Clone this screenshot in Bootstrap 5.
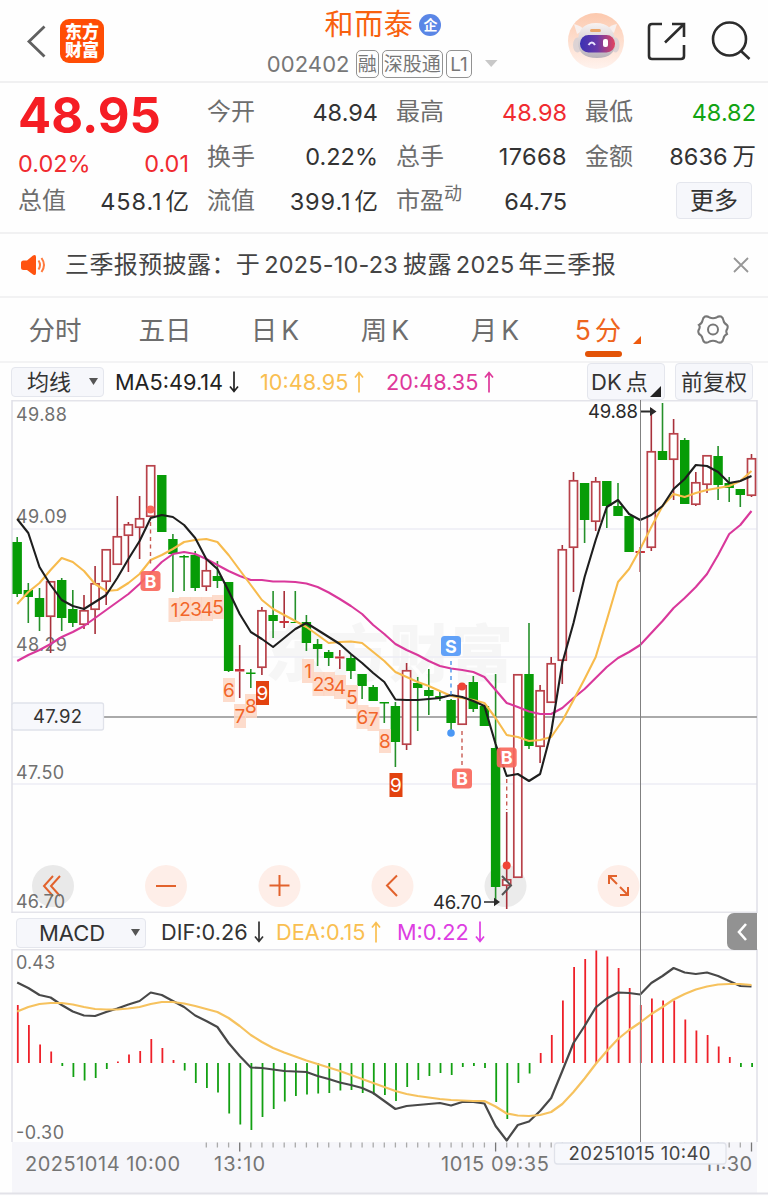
<!DOCTYPE html>
<html lang="zh-CN">
<head>
<meta charset="utf-8">
<meta name="viewport" content="width=device-width, initial-scale=1">
<title>和而泰 002402</title>
<link href="https://cdn.jsdelivr.net/npm/bootstrap@5.3.0/dist/css/bootstrap.min.css" rel="stylesheet">
<style>
  body { font-family: Inter, "Noto Sans CJK SC", sans-serif; background: #fefefe; color: #333; line-height: 1; width: 768px; overflow-x: hidden; font-size: 24px; }
  svg { display: block; flex: none; }
  .hdr { height: 83px; border-bottom: 2px solid #f0f0f1; }
  .hdr-side { width: 250px; }
  .logo { width: 44px; height: 44px; margin-left: 12px; border-radius: 9px; background: #ff4d05; color: #fff; font-size: 17px; line-height: 18px; font-weight: 900; }
  .stock-name { font-size: 29px; letter-spacing: .6px; color: #f8610f; line-height: 34px; }
  .ent { width: 22px; height: 22px; font-size: 14px; font-weight: 700; background: #5a86e6; color: #fff; }
  .stock-code { font-size: 22px; letter-spacing: .1px; color: #777; }
  .tag { height: 28px; border: 1.5px solid #929292; border-radius: 5px; color: #777; font-size: 19px; }
  .quote { height: 151px; padding: 7px 12px 0 18px; display: grid; grid-template-columns: repeat(4, 171px); column-gap: 18px; border-bottom: 2px solid #f1f1f2; }
  .q-row { height: 44.5px; }
  .lbl { color: #6d6d6d; }
  .num { font-size: 23.5px; }
  .airy { letter-spacing: .9px; }
  .unit { margin-left: 3px; letter-spacing: 0; }
  .up { color: #f02b30; }
  .down { color: #12a312; }
  .last-price { font-size: 49px; font-weight: 700; color: #f51d24; letter-spacing: 0; }
  .chip { background: #f6f7fb; border: 1.5px solid #e4e6ed; border-radius: 4px; color: #333; }
  .notice { height: 64px; padding: 0 18px 0 21px; border-bottom: 2px solid #f2f2f3; }
  .cjk { letter-spacing: .4px; }
  .dg { font-size: 23.5px; letter-spacing: .2px; }
  .tabs { height: 65px; padding-top: 1px; display: grid; grid-template-columns: repeat(5, 110px) 100px 118px; border-bottom: 2px solid #f3f3f4; font-size: 26.5px; color: #6d6d6d; }
  .tabs b { font-weight: 400; margin-left: 4px; }
  .tab-on { color: #ee651d; }
  .tab-bar { left: 35px; bottom: 4px; width: 37px; height: 6px; border-radius: 3px; background: #e35307; }
  .ind { height: 37px; font-size: 22px; }
  .val { font-size: 21.7px; padding-top: 2px; }
  .ma10 { color: #f9bf51; } .ma20 { color: #de389a; } .mm { color: #dd3ee2; }
  .macd-row { height: 36px; font-size: 22px; }
  .macd-row .val { padding-top: 3px; }
  .fold { width: 30px; height: 37px; right: 11px; top: 0; background: #929292; border-radius: 7px 0 0 7px; }
  .cross { left: 640px; top: 37px; width: 1px; height: 742px; background: #808080; }
  .arr { width: 12px; height: 24px; margin-left: 5px; margin-top: -2px; fill: none; stroke: currentColor; stroke-width: 1.7; }
  svg text { font-family: Inter, "Noto Sans CJK SC", sans-serif; }
</style>
</head>
<body>
<svg width="0" height="0" class="position-absolute"><defs>
  <symbol id="dn" viewBox="0 0 12 24"><path d="M6 1.500v20M2 16.500l4 5 4-5"/></symbol>
  <symbol id="upw" viewBox="0 0 12 24"><path d="M6 22.500v-20M2 7.500l4-5 4 5"/></symbol>
</defs></svg>
<header class="hdr d-flex justify-content-between">
  <div class="hdr-side d-flex align-items-center ps-4">
    <svg width="24" height="34" viewBox="24 24 24 34" fill="none" stroke="#606060" stroke-width="2.8"><path d="M44.5 26.5 29 41.5l15.500 15"/></svg>
    <div class="logo d-flex flex-column align-items-center justify-content-center"><span>东方</span><span>财富</span></div>
  </div>
  <div class="d-flex flex-column flex-shrink-0 align-items-center" style="padding-top:8px">
    <div class="d-flex align-items-center" style="margin-left:-2px"><span class="stock-name">和而泰</span><span class="ent rounded-circle d-flex align-items-center justify-content-center" style="margin-left:6px">企</span></div>
    <div class="d-flex align-items-center" style="margin-top:8px;margin-left:0">
      <span class="stock-code">002402</span>
      <span class="tag d-flex align-items-center" style="margin-left:6px;padding:0 1px">融</span>
      <span class="tag d-flex align-items-center" style="margin-left:3px;padding:0 1px">深股通</span>
      <span class="tag d-flex align-items-center" style="margin-left:3px;padding:0 3.5px">L1</span>
      <svg style="margin-left:11px" width="18" height="10"><path d="M2 1h12.500L8.200 8z" fill="#c8c8c8"/></svg>
    </div>
  </div>
  <div class="hdr-side d-flex justify-content-end">
    <svg width="200" height="80" viewBox="568 0 200 80">
      <defs>
        <linearGradient id="halo" x1="0" y1="0" x2="0" y2="1"><stop offset="0" stop-color="#fcc9ae"/><stop offset="1" stop-color="#fff3ee"/></linearGradient>
        <linearGradient id="visor"><stop offset="0" stop-color="#3a32b4"/><stop offset=".5" stop-color="#6a3aa8"/><stop offset="1" stop-color="#e2455f"/></linearGradient>
        <linearGradient id="helm" x1="0" y1="0" x2="0" y2="1"><stop offset="0" stop-color="#f8f3f2"/><stop offset="1" stop-color="#b9b2ba"/></linearGradient>
      </defs>
      <circle cx="596" cy="41" r="28" fill="url(#halo)"/>
      <path d="M577 34l-3-10q8 2 10 6zM614 33l3-9q-7 1-9 5z" fill="#f8f0ee"/>
      <ellipse cx="577.500" cy="45" rx="4.500" ry="7.500" fill="#ddd3d4"/><ellipse cx="615.500" cy="45" rx="4" ry="7.500" fill="#ddd3d4"/>
      <path d="M578 42q0-19 18-19t19 19q1 16-18 16t-19-16z" fill="url(#helm)"/>
      <rect x="590" y="29" width="11" height="3" rx="1.500" fill="#eba569"/>
      <rect x="580" y="35" width="35" height="17.500" rx="8.500" fill="url(#visor)"/>
      <path d="M588.500 45q3.500-5 6.500 0" fill="none" stroke="#e9e6ff" stroke-width="2"/><rect x="603" y="39" width="5" height="8" rx="2" fill="#fff"/>
      <g fill="none" stroke="#2c2c2c" stroke-width="2.600">
        <path d="M662 24h-10q-3 0-3 3v29q0 3 3 3h29q3 0 3-3V45M672 24h12v13M684 24l-19 18.500"/>
        <circle cx="729.500" cy="39" r="16.500"/><path d="M741 51l8.500 8"/>
      </g>
    </svg>
  </div>
</header>

<section class="quote">
  <div class="d-flex flex-column">
    <div class="q-row d-flex align-items-center last-price" style="padding-top:7px">48.95</div>
    <div class="q-row d-flex align-items-center justify-content-between num up" style="padding-top:13px"><span>0.02%</span><span>0.01</span></div>
    <div class="q-row d-flex align-items-center justify-content-between"><span class="lbl">总值</span><span class="num airy">458.1<span class="unit">亿</span></span></div>
  </div>
  <div class="d-flex flex-column">
    <div class="q-row d-flex align-items-center justify-content-between"><span class="lbl">今开</span><span class="num">48.94</span></div>
    <div class="q-row d-flex align-items-center justify-content-between"><span class="lbl">换手</span><span class="num">0.22%</span></div>
    <div class="q-row d-flex align-items-center justify-content-between"><span class="lbl">流值</span><span class="num airy">399.1<span class="unit">亿</span></span></div>
  </div>
  <div class="d-flex flex-column">
    <div class="q-row d-flex align-items-center justify-content-between"><span class="lbl">最高</span><span class="num up">48.98</span></div>
    <div class="q-row d-flex align-items-center justify-content-between"><span class="lbl">总手</span><span class="num" style="letter-spacing:.4px">17668</span></div>
    <div class="q-row d-flex align-items-center justify-content-between"><span class="lbl d-flex">市盈<span style="font-size:18px;margin-top:-4px">动</span></span><span class="num">64.75</span></div>
  </div>
  <div class="d-flex flex-column">
    <div class="q-row d-flex align-items-center justify-content-between"><span class="lbl">最低</span><span class="num down">48.82</span></div>
    <div class="q-row d-flex align-items-center justify-content-between"><span class="lbl">金额</span><span class="num">8636<span style="margin-left:5px">万</span></span></div>
    <div class="q-row d-flex align-items-center justify-content-end"><span class="chip d-flex align-items-center justify-content-center" style="width:76px;height:37px;margin-right:4px;margin-top:-2px;padding-top:2px">更多</span></div>
  </div>
</section>

<section class="notice d-flex align-items-center">
  <svg width="25" height="24" viewBox="21 253 25 24"><path d="M21 263q0-2.500 2.500-2.500H27l6-5q3-1.500 3 1.500v16q0 3-3 1.500l-6-4.500h-3.500q-2.500 0-2.500-2.500z" fill="#ff5310"/><path d="M38.500 260.500q3 4.500 0 9M41.500 258q5 7 0 14" fill="none" stroke="#ff7a3d" stroke-width="2"/></svg>
  <div class="d-flex align-items-center text-nowrap" style="margin-left:19px;color:#444"><span class="cjk">三季报预披露：于</span><span class="dg" style="margin-left:4px">2025-10-23</span><span class="cjk" style="margin-left:5px">披露</span><span class="dg" style="margin-left:4px">2025</span><span class="cjk" style="margin-left:4px">年三季报</span></div>
  <svg class="ms-auto" width="18" height="18" fill="none" stroke="#979797" stroke-width="1.800"><path d="M2 2l14 14M16 2 2 16"/></svg>
</section>

<nav class="tabs align-items-center text-center">
  <span>分时</span><span>五日</span><span>日<b>K</b></span><span>周<b>K</b></span><span>月<b>K</b></span>
  <span class="tab-on position-relative h-100 d-flex align-items-center justify-content-center">5<span style="margin-left:4px;margin-right:4px">分</span>
    <svg class="position-absolute" style="right:8px;top:37px" width="9" height="9"><path d="M8 0v8H0z" fill="#ee5a0d"/></svg>
    <i class="tab-bar position-absolute"></i></span>
  <svg style="margin-left:46px" width="34" height="34" viewBox="696 314 34 34" fill="none" stroke="#777" stroke-width="2"><path d="M705 317.500q2.500-.5 4.500 1 3.500 1.500 7 0 2-1.500 4.500-1 2 1 2.500 4 .5 3 3.500 4.500 1.500 1.500 0 4.500-1.500 1.500 0 4.500-3 1.500-3.500 4.500-.5 3-2.500 4-2.500.5-4.500-1-3.500-1.500-7 0-2 1.500-4.500 1-2-1-2.500-4-.5-3-3.500-4.500-1.500-3 0-4.500 1.500-3 0-4.500 3-1.500 3.500-4.500.5-3 2.500-4z"/><circle cx="713" cy="330.500" r="5"/></svg>
</nav>

<main class="position-relative">
  <div class="ind d-flex align-items-center">
    <span class="chip d-flex align-items-center justify-content-between" style="margin-left:11px;width:93px;height:30px;padding:0 5px 0 15px">均线<svg width="9" height="9"><path d="M0 1h9L4.500 8z" fill="#555"/></svg></span>
    <span class="val d-flex align-items-center" style="margin-left:11px;width:145px;color:#222">MA5:49.14<svg class="arr"><use href="#dn"/></svg></span>
    <span class="val ma10 d-flex align-items-center" style="width:126px">10:48.95<svg class="arr"><use href="#upw"/></svg></span>
    <span class="val ma20 d-flex align-items-center">20:48.35<svg class="arr"><use href="#upw"/></svg></span>
    <span class="chip d-flex align-items-center position-relative ms-auto" style="width:78px;height:37px;padding-left:3px">DK<span style="margin-left:4px">点</span><svg class="position-absolute" style="right:3px;bottom:2px" width="11" height="11"><path d="M11 0v11H0z" fill="#222"/></svg></span>
    <span class="chip d-flex align-items-center justify-content-center" style="margin-left:10px;margin-right:15px;width:78px;height:37px">前复权</span>
  </div>

  <svg id="kline" width="768" height="513" viewBox="0 400 768 513">
    <g fill="#f6f6f6" font-size="62" font-weight="900"><text x="265" y="677" textLength="248">东方财富</text></g>
    <path d="M12 529H757M12 657H757M12 784H757" stroke="#ededf5" stroke-width="1.500"/>
    <path d="M12 400.500H757M12 912.500H757" stroke="#e4e4ea" stroke-width="2"/><path d="M12 400V913M757 400V913" stroke="#dfdfe7" stroke-width="1.500"/>
    <g fill="#707070" font-size="18"><text x="16" y="420.500" textLength="51">49.88</text><text x="16" y="523" textLength="51">49.09</text><text x="16" y="651" textLength="51">48.29</text><text x="16" y="778.500" textLength="48">47.50</text></g>
    <circle cx="53" cy="886" r="21" fill="#e9e9e9"/><circle cx="505.500" cy="886" r="21" fill="#ebebeb"/>
    <g fill="#feeee8"><circle cx="166" cy="886" r="21"/><circle cx="279.500" cy="886" r="21"/><circle cx="392.500" cy="886" r="21"/><circle cx="618.500" cy="886" r="21"/></g>
    <g fill="none" stroke="#e2622c" stroke-width="2"><path d="M53 876l-9 10 9 10M60 876l-9 10 9 10M156 886h20M269.500 885.500h20M279.500 875v21M397 875.500 387 885.500l10 10.500"/><path d="M609 884v-8h8M609 876l8 8M620 895h8v-8M628 895l-8-8"/></g>
    <text x="16" y="907.500" font-size="18" fill="#707070" textLength="49">46.70</text>
    <path d="M103 717H757" stroke="#aaa" stroke-width="1.800"/>
    <rect x="12" y="703" width="91.500" height="27" rx="2" fill="#f7f8fc" stroke="#e0e2ea" stroke-width="1.300"/>
    <text x="33" y="723" font-size="18.500" fill="#333" textLength="49">47.92</text>
    <g id="candles"></g>
    <g id="averages" fill="none" stroke-width="2.100" stroke-linejoin="round"></g>
    <path d="M502 876l9 9.500-9 9.500" fill="none" stroke="#555" stroke-width="2"/>
    <g id="counts" font-size="19" text-anchor="middle"></g>
    <g fill="none" stroke="#c85a52" stroke-width="1.400" stroke-dasharray="4 3.500"><path d="M150.500 522V567M462 731V766M506.700 779V810"/><path d="M451 661V696" stroke="#4b93e8"/></g>
    <circle cx="150.500" cy="509.500" r="4" fill="#f9685a"/><circle cx="451" cy="733" r="3.800" fill="#4b98f5"/><circle cx="462" cy="686.500" r="4" fill="#f04436"/><circle cx="506.700" cy="865.500" r="4" fill="#f04436"/>
    <g id="signals" font-size="18" font-weight="700" text-anchor="middle" fill="#fff"></g>
    <g fill="#2a2a2a" font-size="18.500"><text x="588" y="418" textLength="50">49.88</text><text x="433" y="909" textLength="49">46.70</text><path d="M641 410.500h9v-3.500l6.500 4.500-6.500 4.500v-3.500h-9zM484 901.200h10v-3.500l6 4.300-6 4.300v-3.500h-10z"/></g>
  </svg>

  <div class="macd-row d-flex align-items-center position-relative">
    <span class="chip d-flex align-items-center justify-content-between" style="margin-left:16px;width:130px;height:30px;padding:0 5px 0 22px;margin-top:3px">MACD<svg width="9" height="9"><path d="M0 1h9L4.500 8z" fill="#555"/></svg></span>
    <span class="val d-flex align-items-center" style="margin-left:15px;width:115px">DIF:0.26<svg class="arr"><use href="#dn"/></svg></span>
    <span class="val ma10 d-flex align-items-center" style="width:121px">DEA:0.15<svg class="arr"><use href="#upw"/></svg></span>
    <span class="val mm d-flex align-items-center">M:0.22<svg class="arr"><use href="#dn"/></svg></span>
    <span class="fold position-absolute d-flex align-items-center justify-content-center"><svg width="12" height="20" fill="none" stroke="#fff" stroke-width="2.600"><path d="M10 2 3 10l7 8"/></svg></span>
  </div>

  <svg id="macd" width="768" height="247" viewBox="0 949 768 247">
    <rect x="12" y="1142" width="745" height="51" fill="#f6f6fa"/>
    <path d="M12 949.500H757" stroke="#e4e4ea" stroke-width="2"/><path d="M12 949V1142M757 949V1142" stroke="#dfdfe7" stroke-width="1.500"/><path d="M0 1193.500H768" stroke="#e2e2e8" stroke-width="2"/>
    <g fill="#707070" font-size="18"><text x="16" y="968.500" textLength="39">0.43</text><text x="16" y="1138.500" textLength="48">-0.30</text></g>
    <g id="bars" stroke-width="1.800"></g>
    <g id="signal-lines" fill="none" stroke-width="2.200" stroke-linejoin="round"></g>
    <g id="ticks" stroke="#aaa" stroke-width="1.300"></g>
    <g fill="#757575" font-size="20"><text x="25" y="1171" textLength="155">20251014 10:00</text><text x="214" y="1171" textLength="51">13:10</text><text x="441" y="1171" textLength="108">1015 09:35</text><text x="704" y="1171" textLength="48">11:30</text></g>
    <rect x="554.500" y="1143" width="171.500" height="21" rx="3" fill="#f7f8fc" stroke="#e0e2ea" stroke-width="1.300"/>
    <text x="568.500" y="1160" font-size="18.500" fill="#444" textLength="142">20251015 10:40</text>
  </svg>
  <div class="cross position-absolute"></div>
</main>

<script src="https://cdn.jsdelivr.net/npm/bootstrap@5.3.0/dist/js/bootstrap.bundle.min.js"></script>
<script>
  const X = i => +(17.2 + 11.125 * i).toFixed(1);
  const put = (id, s) => { document.getElementById(id).innerHTML = s; };
  // direction, body top, body bottom, wick top, wick bottom
  const candles = [
    'g 542 594 537 597','g 590 597 583 623','g 598 617 588 631','r 581 617 581 653','g 580 618 578 631','g 609 623 590 627','r 610 625 595 629','r 583 610 566 634','r 549 582 549 605','r 536 565 496 565',
    'r 524 536 522 572','r 518 528 496 559','r 465 517 465 517','g 475 532 475 532','g 539 554 534 592','g 556 557.5 555 591','g 555 588 551 591','r 570 587 558 591','g 576 581 561 588','g 582 671 582 672',
    'r 669 671.5 645 698','g 672.5 674 669 688','r 610 668 607 675','g 615 621 591 638','r 621 623 591 628','g 622 623 591 622','g 622 643 615 651','g 644 649 639 666','g 652 658 650 666','r 656.5 658.500 650 669',
    'g 658 671 655 679','g 674 686 674 699','g 687 701 685 701','g 702 703.500 702 723','g 706 742 702 767','r 670 745 663 750','g 683 688 677 731','g 690 696 669 715','g 696 698 692 701','g 700 723 699 731',
    'r 685 725 685 725','g 682 709 676 712','g 706 726 706 726','g 748 887 674 902','r 879 886 812 909','r 674 878 674 878','g 674 746 623 749','r 690 747 685 763','r 663 703 657 703','r 549 661 545 684',
    'r 480 548 472 592','g 483 520 483 543','r 481 522 477 531','g 481 506 481 528','g 506 516 483 516','g 516 552 516 552','r 551 553 547 572','r 451 548 408 551','g 451 460 403 460','r 433 460 419 500',
    'g 440 504 438 504','r 482 505 472 506','r 455 485 455 493','g 456 485 446 500','g 483 488 477 502','g 489 495 489 507','r 458 496 454 497'];
  put('candles', candles.map((c, i) => {
    const [k, ...v] = c.split(' '), [t, b, wt, wb] = v.map(Number), x = X(i), h = b - t;
    if (k === 'g') return `<path d="M${x} ${wt}V${wb}" stroke="#25902a" stroke-width="1.6"/><rect x="${x - 4.7}" y="${t}" width="9.4" height="${h}" fill="#079c07"/>`;
    const w = `<path d="M${x} ${wt}V${t}M${x} ${b}V${wb}" stroke="#a8303a" stroke-width="1.6"/>`;
    return w + (h < 4 ? `<rect x="${x - 4.7}" y="${t}" width="9.4" height="${h}" fill="#c9323a"/>`
      : `<rect x="${x - 4}" y="${t + .8}" width="8" height="${h - 1.6}" fill="#fff" stroke="#b8424a" stroke-width="1.7"/>`);
  }).join(''));

  const line = (ys, color) => `<polyline stroke="${color}" points="${ys.map((y, i) => X(i) + ',' + y).join(' ')}"/>`;
  const ma5 = [519,533,567,585,600,606,609,602,595,578,559,541,518,515,517,525,538,559,569,591,614,632,639,647,638,629,623,630,637,644,654,663,673,682,699.5,700,700,699,698,695,697,701,706,744,776,774,781,774,732,663,623,577,540,507,500,514,520,515,506,489,479,465,466,472,483,481,476];
  const ma10 = [604,592,583,570,558,562,571,584,591,590,583,574,560,555,549,542,540,539,542,555,570,585,600,609,615,621,627,635,643,642,641.5,643,652,661,672,677,682,686,691,696,698,700,703,718,735,737,741,740,737,721,700,679,657,620,582,569,549,527,506,494,497,493,490,488,486,481,471];
  const ma20 = [661,655,650,644,637,632,626,618,610,602,594,584,573,562,554,552,554,559,565,571,576,580,580,581.5,581.5,582,583.5,587,592.5,599,606,614,625,634,644,650,655,661,666,668.5,670,672,677,690,703,707,711.5,714,714,708,698,689,678,667,658,652,645,633,621,608,598,587,574,555,534,525,511];
  put('averages', line(ma20, '#d9389b') + line(ma10, '#f7bb4d') + line(ma5, '#1e1e1e'));

  const counts = [[1,174.5,610],[2,185,609],[3,196,609],[4,207,609],[5,218,607],[6,229,690],[7,240,716],[8,251,706],[9,262.5,693],[1,308,671],[2,318.500,684],[3,329,684],[4,340,687],[5,352,697],[6,362.5,717],[7,373.5,719],[8,385,741],[9,396,785]];
  put('counts', counts.map(([n, x, y]) => n === 9
    ? `<rect x="${x - 6.5}" y="${y - 12}" width="13" height="24" fill="#e2420f"/><text x="${x}" y="${y + 7}" fill="#fff">9</text>`
    : `<rect x="${x - 6}" y="${y - 12}" width="12" height="24" fill="#fdd6c3" fill-opacity=".85"/><text x="${x}" y="${y + 7}" fill="#f2662a">${n}</text>`).join(''));

  const signals = [['B',150.5,581],['S',451,646],['B',462,778.5],['B',506.7,757.5]];
  put('signals', signals.map(([t, x, y]) => `<rect x="${x - 10}" y="${y - 10}" width="20" height="20" rx="3.5" fill="${t === 'S' ? '#5499f7' : '#f8685c'}" fill-opacity=".92"/><text x="${x}" y="${y + 6.5}">${t}</text>`).join(''));

  const bars = [1005,1025,1044.5,1051.5,1066,1077,1080.5,1078,1069,1061.5,1054.5,1051,1039,1048,1060,1070.5,1083,1088,1092.5,1113.5,1124.5,1130,1117,1109,1101.5,1096,1094.5,1093.5,1093,1090.5,1090,1093,1094.5,1095,1101,1087,1080,1076,1073,1075,1067,1066,1068,1102,1119,1083,1073.5,1053,1035,1000.5,967,959,950.5,956.5,968,988,1005,998.5,1000.5,1000.5,1019.5,1030.5,1035,1046.5,1057,1067,1067];
  put('bars', bars.map((y, i) => `<path d="M${X(i) + .6} 1063V${y}" stroke="${y < 1063 ? '#ee2029' : '#12a012'}"/>`).join(''));
  const dif = [982.5,988,995,997.5,1005,1011.5,1015.5,1016,1012,1008.5,1004.5,1001,992.5,995,1001,1007,1015.5,1021,1027,1043,1056,1067.5,1068,1069.5,1071,1071.5,1072,1076,1079,1082.5,1085,1088,1093,1101,1109,1106,1105,1104,1103,1105.5,1102,1102,1103.5,1126,1140.5,1125,1121.5,1111,1098,1071,1043,1026,1007.5,998.5,992.5,993,994.5,983,976,968,972.5,974,972.5,976,981,986,986.5];
  const dea = [1011.5,1007,1004,1003,1003,1004.5,1007,1009,1009.5,1009.5,1008.5,1007,1004,1002,1002,1003.5,1006,1009,1012,1018,1026,1035,1042,1048,1052.5,1056.5,1060.5,1064,1067.5,1071,1075,1079,1083,1087,1091,1094,1096,1097.5,1099,1100,1100.5,1101,1101,1106.5,1113.5,1115.5,1116,1115,1112,1104,1092,1078.5,1064,1051,1039,1030,1022.5,1014,1007,999.5,994,989.5,986.5,984.5,984,984,985];
  put('signal-lines', line(dif, '#484848') + line(dea, '#f6c25e'));
  put('ticks', bars.map((_, i) => i < 17 ? '' : `<path d="M${X(i)} 1142.500v${[20, 43, 66].includes(i) ? 9 : 5}" ${[20, 43, 66].includes(i) ? 'stroke="#777"' : ''}/>`).join(''));
</script>
</body>
</html>
